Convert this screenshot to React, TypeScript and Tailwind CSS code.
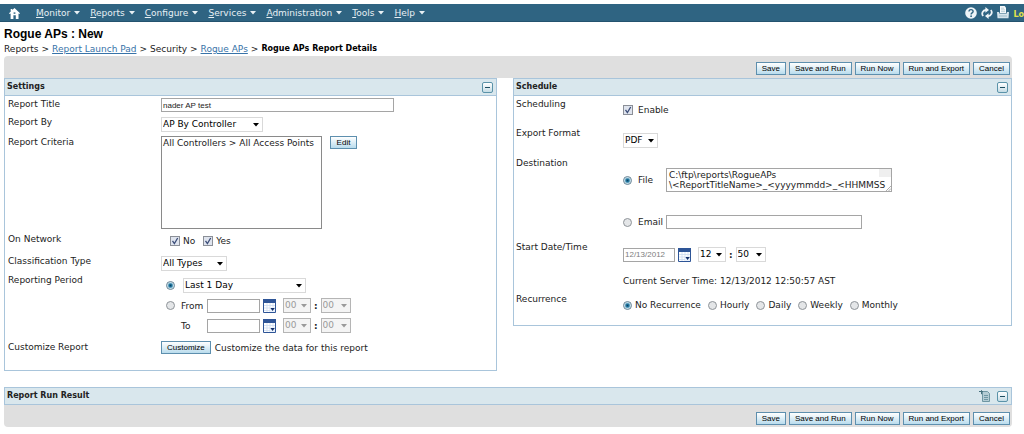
import { useState, type ReactNode } from "react";

const NAV_ITEMS = ["Monitor", "Reports", "Configure", "Services", "Administration", "Tools", "Help"];
const ACTIONS = ["Save", "Save and Run", "Run Now", "Run and Export", "Cancel"];
const RECURRENCE = ["No Recurrence", "Hourly", "Daily", "Weekly", "Monthly"];

const SANS = "font-['Verdana','DejaVu_Sans',sans-serif]";
const ARIAL = "font-['Liberation_Sans',Arial,sans-serif]";

function Caret({ className = "" }: { className?: string }) {
    return (
        <svg viewBox="0 0 6 4" className={`w-[6px] h-1 fill-current ${className}`} aria-hidden="true">
            <path d="M0 0h6L3 3.6z" />
        </svg>
    );
}

function HomeIcon() {
    return (
        <svg viewBox="0 0 11 11" className="w-[11px] h-[11px]" aria-hidden="true">
            <path fill="#fff" d="M5.5 0 11 5.3l-.7.8-.8-.7V11H6.8V7.2H4.4V11H1.6V5.4l-.9.7L0 5.3 1.7 3.7V1h1.6v1.1z" />
            <path fill="#2f6482" d="M4.6 4.4h1.8v1.4H4.6z" />
        </svg>
    );
}

function HelpIcon() {
    return (
        <svg viewBox="0 0 12 12" className="w-3 h-3" aria-hidden="true">
            <circle cx="6" cy="6" r="5.8" fill="#eef4f7" />
            <path d="M4 4.6C4 3.2 4.9 2.6 6 2.6s2.1.6 2.1 1.8c0 1.4-2 1.5-2 3" fill="none" stroke="#2f6482" strokeWidth="1.4" />
            <circle cx="6.1" cy="9.2" r=".9" fill="#2f6482" />
        </svg>
    );
}

function RefreshIcon() {
    return (
        <svg viewBox="0 0 12 12" className="w-3 h-3" aria-hidden="true">
            <path d="M2.2 9A3.6 3.6 0 0 1 5 3M9.8 3A3.6 3.6 0 0 1 7 9" fill="none" stroke="#eef4f7" strokeWidth="1.8" />
            <path fill="#eef4f7" d="M4.4 0 8 2.9 4.4 5.8zM7.6 6.2V12L4 9.1z" />
        </svg>
    );
}

function PrintIcon() {
    return (
        <svg viewBox="0 0 12 13" className="w-3 h-[13px]" aria-hidden="true">
            <path fill="#f4f8fa" d="M3 0h4.6L9 1.5V7H3z" />
            <path d="M4 2.2h3M4 3.9h4M4 5.6h4" stroke="#a8c1ce" strokeWidth=".7" />
            <path fill="#d5e4ec" d="M0 6h2.2v1.6h7.6V6H12l-.5 6.2H.5z" />
            <path d="M2 10h8" stroke="#8fb0c0" strokeWidth=".8" />
        </svg>
    );
}

function CalendarIcon() {
    return (
        <svg viewBox="0 0 13 14" className="w-[13px] h-[14px]" aria-hidden="true">
            <path fill="#fff" stroke="#2e5597" d="M.5.5h12v13H.5z" />
            <path fill="#2e5597" d="M0 0h13v4H0z" />
            <path d="M1 6.5h11M1 9h11M1 11.5h11M4 4v9M7 4v9M10 4v9" stroke="#ccdcf1" strokeWidth=".8" />
            <path fill="#eaf2fc" d="M7 8h5v5H7z" />
            <path fill="#13306b" d="M7.4 9h4.4l-2.2 3z" />
        </svg>
    );
}

function CalendarButton({ label }: { label: string }) {
    return (
        <button type="button" aria-label={label} className="cursor-pointer">
            <CalendarIcon />
        </button>
    );
}

function CollapseButton({ label }: { label: string }) {
    return (
        <button
            type="button"
            aria-label={label}
            className="flex items-center justify-center w-[11px] h-[11px] cursor-pointer rounded-xs border border-[#5b93a9] bg-linear-to-b from-white to-[#c5dce5]"
        >
            <span className="w-[5px] h-px bg-[#1f4d60]" />
        </button>
    );
}

function ExportIcon() {
    return (
        <svg viewBox="0 0 12 12" className="w-3 h-3" aria-hidden="true">
            <path fill="#b4ccd4" stroke="#6f96a3" d="M3.5 1.5h5l2 2v8h-7z" />
            <path d="M5 5.5h4M5 7.5h4M5 9.5h4" stroke="#6f96a3" />
            <path d="M0 1.5h4M2.5.2v4" stroke="#46707d" />
        </svg>
    );
}

function Button({ children }: { children: ReactNode }) {
    return (
        <button
            type="button"
            className={`h-[13px] min-w-[27px] px-[5px] cursor-pointer whitespace-nowrap border border-[#5d8fae] bg-linear-to-b from-white to-[#b9dced] text-[8px] leading-[11px] text-black ${ARIAL}`}
        >
            {children}
        </button>
    );
}

function Select({ label, options, width, disabled = false }: { label: string; options: string[]; width: string; disabled?: boolean }) {
    return (
        <span className={`relative inline-flex ${width}`}>
            <select
                aria-label={label}
                disabled={disabled}
                className={`w-full h-[15px] appearance-none border pl-px text-[9px] leading-[13px] ${disabled ? "border-[#b5b5b5] bg-[#f4f4f4] text-[#9a9a9a]" : "border-[#d9d9d9] bg-white text-black"}`}
            >
                {options.map((o) => (
                    <option key={o}>{o}</option>
                ))}
            </select>
            <Caret className={`pointer-events-none absolute right-1 top-[6px] ${disabled ? "text-[#9a9a9a]" : "text-black"}`} />
        </span>
    );
}

function TextInput({ label, width, value = "", muted = false }: { label: string; width: string; value?: string; muted?: boolean }) {
    return (
        <input
            type="text"
            aria-label={label}
            defaultValue={value}
            className={`h-[14px] min-w-0 border border-[#a5a5a5] bg-white px-px text-[8px] ${ARIAL} ${width} ${muted ? "text-[#7d7d7d]" : "text-[#222]"}`}
        />
    );
}

function Checkbox({ label, gap = "gap-[3px]" }: { label: string; gap?: string }) {
    return (
        <label className={`flex items-center ${gap}`}>
            <span className="relative flex">
                <input type="checkbox" defaultChecked className="peer w-[10px] h-[10px] appearance-none border border-[#8b8f97] bg-[#dfe4ee]" />
                <svg viewBox="0 0 10 10" className="pointer-events-none invisible absolute inset-0 peer-checked:visible" aria-hidden="true">
                    <path d="M2.5 4.8 4.4 7.6 7.7 2" fill="none" stroke="#3c4d78" strokeWidth="1.3" />
                </svg>
            </span>
            {label}
        </label>
    );
}

function Radio({ name, value, checked, onSelect, children, gap = "gap-1" }: {
    name: string;
    value: string;
    checked: boolean;
    onSelect: (value: string) => void;
    children?: ReactNode;
    gap?: string;
}) {
    return (
        <label className={`flex items-center whitespace-nowrap ${gap}`}>
            <input
                type="radio"
                name={name}
                aria-label={value}
                checked={checked}
                onChange={() => onSelect(value)}
                className="w-[9px] h-[9px] shrink-0 appearance-none rounded-full border border-[#8f9499] bg-[#e4e6e8] checked:border-[#6c8797] checked:bg-[radial-gradient(circle,#0c4263_0,#2379a2_30%,#d5e9f2_65%)]"
            />
            {children}
        </label>
    );
}

function Row({ label, height, labelWidth, children }: { label: string; height: string; labelWidth: string; children: ReactNode }) {
    return (
        <div className={`flex items-start ${height}`}>
            <div className={`shrink-0 leading-4 ${labelWidth}`}>{label}</div>
            <div className="min-w-0 flex-1">{children}</div>
        </div>
    );
}

function TimePicker({ label, hour, minute, disabled = false }: { label: string; hour: string; minute: string; disabled?: boolean }) {
    return (
        <div className="flex items-center gap-[3px]">
            <Select label={`${label} hour`} options={[hour]} width="w-[28px]" disabled={disabled} />
            <b>:</b>
            <Select label={`${label} minute`} options={[minute]} width="w-[30px]" disabled={disabled} />
        </div>
    );
}

function PanelHeader({ title, children }: { title: string; children?: ReactNode }) {
    return (
        <div className="flex h-[17px] items-center justify-between border-b border-[#a9c5db] bg-[#d9e7ed] pl-[2px] pr-[3px]">
            <h2 className="text-[8px] font-bold text-[#222]">{title}</h2>
            <div className="flex items-center gap-[6px]">
                {children}
                <CollapseButton label={`Collapse ${title}`} />
            </div>
        </div>
    );
}

function Actions({ className = "" }: { className?: string }) {
    return (
        <div className={`flex h-[22px] items-center justify-end gap-[3px] bg-[#dfdfdf] pr-[2px] ${className}`}>
            {ACTIONS.map((a) => (
                <Button key={a}>{a}</Button>
            ))}
        </div>
    );
}

function Settings() {
    const [period, setPeriod] = useState("Preset period");
    const w = "w-[153px]";

    return (
        <section className="border border-[#a9c5db]">
            <PanelHeader title="Settings" />
            <div className="pl-[3px]">
                <Row label="Report Title" height="min-h-[18px]" labelWidth={w}>
                    <div className="flex pt-[2px]">
                        <TextInput label="Report Title" value="nader AP test" width="w-[233px]" />
                    </div>
                </Row>
                <Row label="Report By" height="min-h-5" labelWidth={w}>
                    <div className="flex pt-[3px]">
                        <Select label="Report By" options={["AP By Controller"]} width="w-[102px]" />
                    </div>
                </Row>
                <Row label="Report Criteria" height="min-h-[97px]" labelWidth={w}>
                    <div className="flex items-start gap-2 pt-[2px]">
                        <select aria-label="Report Criteria" size={6} className="w-[161px] h-[93px] overflow-hidden border border-[#8a8a8a] bg-white text-[9px]">
                            <option className="px-px pt-px leading-4">All Controllers &gt; All Access Points</option>
                        </select>
                        <Button>Edit</Button>
                    </div>
                </Row>
                <Row label="On Network" height="min-h-[22px]" labelWidth={w}>
                    <div className="flex h-5 items-center gap-2 pl-[9px]">
                        <Checkbox label="No" />
                        <Checkbox label="Yes" />
                    </div>
                </Row>
                <Row label="Classification Type" height="min-h-[19px]" labelWidth={w}>
                    <div className="flex pt-[3px]">
                        <Select label="Classification Type" options={["All Types"]} width="w-[66px]" />
                    </div>
                </Row>
                <Row label="Reporting Period" height="min-h-[67px]" labelWidth={w}>
                    <div className="flex flex-col gap-[5px] pt-[6px] pl-[5px]">
                        <div className="flex items-center gap-2">
                            <Radio name="period" value="Preset period" checked={period === "Preset period"} onSelect={setPeriod} />
                            <Select label="Preset period" options={["Last 1 Day"]} width="w-[123px]" />
                        </div>
                        {["From", "To"].map((edge) => (
                            <div key={edge} className="flex h-[15px] items-center">
                                <div className="w-[41px]">
                                    {edge === "From" ? (
                                        <Radio name="period" value="From" checked={period === "From"} onSelect={setPeriod} gap="gap-[6px]">From</Radio>
                                    ) : (
                                        <span className="pl-[15px]">To</span>
                                    )}
                                </div>
                                <TextInput label={`${edge} date`} width="w-[53px]" />
                                <div className="flex items-center gap-[7px] pl-[3px]">
                                    <CalendarButton label={`Pick ${edge} date`} />
                                    <TimePicker label={edge} hour="00" minute="00" disabled />
                                </div>
                            </div>
                        ))}
                    </div>
                </Row>
                <Row label="Customize Report" height="min-h-[31px]" labelWidth={w}>
                    <div className="flex items-center gap-1 pt-[2px]">
                        <Button>Customize</Button>
                        <span>Customize the data for this report</span>
                    </div>
                </Row>
            </div>
        </section>
    );
}

function Schedule() {
    const [destination, setDestination] = useState("File");
    const [recurrence, setRecurrence] = useState("No Recurrence");
    const w = "w-[107px]";

    return (
        <section className="border border-[#a9c5db]">
            <PanelHeader title="Schedule" />
            <div className="pl-[2px]">
                <Row label="Scheduling" height="min-h-[29px]" labelWidth={w}>
                    <div className="flex pt-2">
                        <Checkbox label="Enable" gap="gap-[5px]" />
                    </div>
                </Row>
                <Row label="Export Format" height="min-h-[30px]" labelWidth={w}>
                    <div className="flex pt-2">
                        <Select label="Export Format" options={["PDF"]} width="w-[35px]" />
                    </div>
                </Row>
                <Row label="Destination" height="min-h-[84px]" labelWidth={w}>
                    <div className="flex items-center pt-[13px]">
                        <div className="w-[43px]">
                            <Radio name="destination" value="File" checked={destination === "File"} onSelect={setDestination} gap="gap-[6px]">File</Radio>
                        </div>
                        <div className="relative flex">
                            <textarea
                                aria-label="File path"
                                defaultValue={"C:\\ftp\\reports\\RogueAPs\n\\<ReportTitleName>_<yyyymmdd>_<HHMMSS"}
                                className="w-[226px] h-6 resize-none overflow-hidden whitespace-pre border border-[#a5a5a5] bg-white px-[2px] py-px text-[9px] leading-[10px]"
                            />
                            <span className="pointer-events-none absolute right-px top-px w-3 h-2 bg-[#efefef]" />
                            <svg viewBox="0 0 5 5" className="pointer-events-none absolute right-px bottom-px w-[5px] h-[5px]" aria-hidden="true">
                                <path d="M0 5 5 0M2.5 5 5 2.5" stroke="#9a9a9a" strokeWidth=".8" />
                            </svg>
                        </div>
                    </div>
                    <div className="flex items-center pt-[23px]">
                        <div className="w-[43px]">
                            <Radio name="destination" value="Email" checked={destination === "Email"} onSelect={setDestination} gap="gap-[6px]">Email</Radio>
                        </div>
                        <TextInput label="Email address" width="w-[196px]" />
                    </div>
                </Row>
                <Row label="Start Date/Time" height="min-h-[52px]" labelWidth={w}>
                    <div className="flex items-center gap-[7px] pt-2">
                        <div className="flex items-center gap-[3px]">
                            <TextInput label="Start date" value="12/13/2012" width="w-[52px]" muted />
                            <CalendarButton label="Pick start date" />
                        </div>
                        <TimePicker label="Start" hour="12" minute="50" />
                    </div>
                    <p className="pt-[13px]">Current Server Time: 12/13/2012 12:50:57 AST</p>
                </Row>
                <Row label="Recurrence" height="min-h-[34px]" labelWidth={w}>
                    <div className="flex gap-[7px] pt-2">
                        {RECURRENCE.map((r) => (
                            <Radio key={r} name="recurrence" value={r} checked={recurrence === r} onSelect={setRecurrence} gap="gap-[3px]">
                                {r}
                            </Radio>
                        ))}
                    </div>
                </Row>
            </div>
        </section>
    );
}

export default function App() {
    return (
        <div className={`min-h-screen overflow-hidden bg-white pt-1 text-[9px] leading-3 text-[#222] ${SANS}`}>
            <header className="flex h-[18px] items-center justify-between overflow-hidden border-b border-[#24536f] bg-[#2f6482] pl-[9px] text-[#e8f0f4]">
                <nav className="flex items-center gap-[10px]">
                    <a href="#home" aria-label="Home" className="mr-[6px] pt-[2px]">
                        <HomeIcon />
                    </a>
                    {NAV_ITEMS.map((item) => (
                        <a key={item} href={`#${item.toLowerCase()}`} className="flex items-center gap-1">
                            <span className="first-letter:underline">{item}</span>
                            <Caret />
                        </a>
                    ))}
                </nav>
                <div className="flex items-center gap-1">
                    <HelpIcon />
                    <RefreshIcon />
                    <PrintIcon />
                    <a href="#logout" className="pt-1 text-[8px] font-bold text-[#e3e34a]">Lo</a>
                </div>
            </header>

            <main className="ml-1 mr-3">
                <h1 className={`pt-1 text-[12px] leading-4 font-bold text-black ${ARIAL}`}>Rogue APs : New</h1>
                <nav className="flex h-[14px] items-center gap-[3px]" aria-label="Breadcrumb">
                    <span>Reports</span>
                    <span>&gt;</span>
                    <a href="#launch-pad" className="text-[#3873a8] underline">Report Launch Pad</a>
                    <span>&gt;</span>
                    <span>Security</span>
                    <span>&gt;</span>
                    <a href="#rogue-aps" className="text-[#3873a8] underline">Rogue APs</a>
                    <span>&gt;</span>
                    <b className="text-[8px] text-black">Rogue APs Report Details</b>
                </nav>

                <Actions className="rounded-t-sm pt-[2px]" />
                <div className="grid grid-cols-[493fr_499fr] items-start gap-4">
                    <Settings />
                    <Schedule />
                </div>

                <section className="pt-4">
                    <div className="border border-b-0 border-[#a9c5db]">
                        <PanelHeader title="Report Run Result">
                            <ExportIcon />
                        </PanelHeader>
                    </div>
                    <Actions className="rounded-b-sm pt-1" />
                </section>
            </main>
        </div>
    );
}
